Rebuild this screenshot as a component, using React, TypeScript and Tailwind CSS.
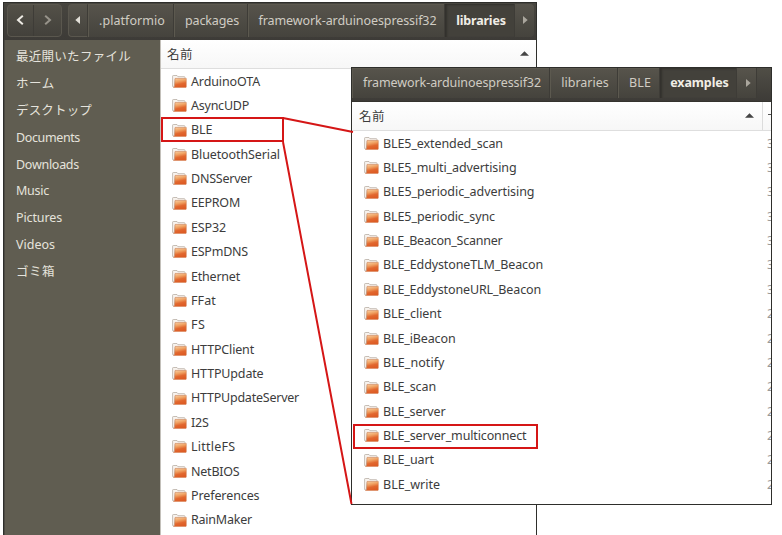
import { useLayoutEffect, useRef, useState } from "react";

type Entry = [name: string, width: number];

const places: Entry[] = [
  ["最近開いたファイル", 114],
  ["ホーム", 38],
  ["デスクトップ", 75],
  ["Documents", 63],
  ["Downloads", 62],
  ["Music", 32],
  ["Pictures", 45],
  ["Videos", 38],
  ["ゴミ箱", 38],
];

const libraries: Entry[] = [
  ["ArduinoOTA", 68],
  ["AsyncUDP", 57],
  ["BLE", 20.5],
  ["BluetoothSerial", 88],
  ["DNSServer", 60],
  ["EEPROM", 48],
  ["ESP32", 34],
  ["ESPmDNS", 56],
  ["Ethernet", 48],
  ["FFat", 24],
  ["FS", 13.5],
  ["HTTPClient", 62],
  ["HTTPUpdate", 71.5],
  ["HTTPUpdateServer", 107],
  ["I2S", 16.5],
  ["LittleFS", 43.5],
  ["NetBIOS", 47.5],
  ["Preferences", 67.5],
  ["RainMaker", 60],
];

const examples: Entry[] = [
  ["BLE5_extended_scan", 119],
  ["BLE5_multi_advertising", 132.5],
  ["BLE5_periodic_advertising", 150.5],
  ["BLE5_periodic_sync", 111],
  ["BLE_Beacon_Scanner", 118.5],
  ["BLE_EddystoneTLM_Beacon", 159],
  ["BLE_EddystoneURL_Beacon", 157],
  ["BLE_client", 57.5],
  ["BLE_iBeacon", 71.5],
  ["BLE_notify", 60.5],
  ["BLE_scan", 52],
  ["BLE_server", 61.5],
  ["BLE_server_multiconnect", 142.5],
  ["BLE_uart", 50],
  ["BLE_write", 56],
];

const dates = ["3", "3", "3", "3", "3", "3", "3", "2", "2", "2", "2", "2", "2", "2", "2"];

/* Text whose letter spacing is adjusted so that it fills the given width. */
function Label({ text, width }: { text: string; width: number }) {
  const ref = useRef<HTMLSpanElement>(null);
  const [spacing, setSpacing] = useState(0);
  useLayoutEffect(() => {
    if (ref.current) {
      const natural = ref.current.getBoundingClientRect().width;
      setSpacing((width + 1 - natural) / text.length);
    }
  }, [text, width]);
  return (
    <span ref={ref} className="whitespace-nowrap" style={{ letterSpacing: `${spacing}px` }}>
      {text}
    </span>
  );
}

function Folder() {
  return (
    <svg width="15" height="13" viewBox="0 0 15 13" className="mb-px shrink-0">
      <defs>
        <linearGradient id="folder" x1="0" y1="0" x2="0.3" y2="1">
          <stop offset="0" stopColor="#f8d3a8" />
          <stop offset="0.4" stopColor="#f0a263" />
          <stop offset="0.7" stopColor="#e2682f" />
          <stop offset="1" stopColor="#dd5c25" />
        </linearGradient>
      </defs>
      <path d="M.6 11.5V1.2Q.6.5 1.3.5H5l.9 1.2h6.4q.7 0 .7.7V4H3.2L2.2 12z" fill="#f8f4ef" stroke="#b9aea4" strokeWidth=".8" />
      <path d="M3 3.4h11.3v8.3q0 .9-.9.9H1.4q1.2-.3 1.3-1.4z" fill="url(#folder)" stroke="#cf7a4c" strokeWidth=".5" />
    </svg>
  );
}

function FileRow({ entry }: { entry: Entry }) {
  return (
    <div className="flex h-[24.38px] items-center gap-[4px]">
      <Folder />
      <Label text={entry[0]} width={entry[1]} />
    </div>
  );
}

function Crumb({ text, width, box, active }: { text: string; width: number; box: string; active?: boolean }) {
  return (
    <div
      className={`flex h-full shrink-0 items-center justify-center border-r border-[#3e3c37] pl-[3px] pt-px ${box} ${
        active
          ? "bg-[#43413b] font-bold text-[#f0ede6] shadow-[inset_2px_1px_2px_#33312d]"
          : "bg-linear-to-b from-[#57544c] to-[#45433d] text-[#d0ccc3] shadow-[inset_1px_1px_0_#5c594f]"
      }`}
    >
      <Label text={text} width={width} />
    </div>
  );
}

function Arrow({ left, className }: { left?: boolean; className: string }) {
  return (
    <svg width="5" height="8" viewBox="0 0 5 8" className={className}>
      <path d={left ? "M5 0v8L.3 4z" : "M0 0v8l4.7-4z"} fill="currentColor" />
    </svg>
  );
}

function Chevron({ right, className }: { right?: boolean; className: string }) {
  return (
    <svg width="8" height="10" viewBox="0 0 8 10" className={className}>
      <path d={right ? "M1.2 .8 6 5l-4.8 4.2" : "M6.8 .8 2 5l4.8 4.2"} fill="none" stroke="currentColor" strokeWidth="2" />
    </svg>
  );
}

function SortArrow() {
  return (
    <svg width="9" height="5" viewBox="0 0 9 5">
      <path d="M0 4.7 4.5.3 9 4.7z" fill="#454545" />
    </svg>
  );
}

export default function App() {
  return (
    <div className="relative h-[535px] w-[782px] overflow-hidden bg-white font-['Noto_Sans','Noto_Sans_CJK_JP',sans-serif] text-[12.5px] leading-none text-[#3c3c3c]">
      <section className="absolute left-[3px] top-[2px] flex h-[540px] w-[534px] flex-col border border-[#2e2e2b] bg-white">
        <header className="flex h-[37px] shrink-0 bg-linear-to-b from-[#47453f] to-[#3d3b37] pb-[3px] pl-[3px] pt-px">
          <div className="flex w-[55px] rounded-[4px] border border-[#5a574e] bg-linear-to-b from-[#535048] to-[#43413b]">
            <div className="flex w-[26px] items-center justify-center border-r border-[#3e3c37] pb-[2px] pr-[2px] text-[#edeae4]">
              <Chevron className="block" />
            </div>
            <div className="flex flex-1 items-center justify-center pb-[2px] text-[#97938a]">
              <Chevron right className="block" />
            </div>
          </div>
          <div className="ml-[6px] flex flex-1">
            <div className="flex w-[20px] items-center justify-center rounded-l-[4px] border border-r-[#3e3c37] border-[#5a574e] bg-linear-to-b from-[#57544c] to-[#45433d] pb-px pr-[2px] text-[#e2dfd8]">
              <Arrow left className="block" />
            </div>
            <Crumb text=".platformio" width={65} box="w-[86px]" />
            <Crumb text="packages" width={53} box="w-[74px]" />
            <Crumb text="framework-arduinoespressif32" width={177} box="w-[197px]" />
            <Crumb text="libraries" width={48.5} box="w-[70px]" active />
            <div className="flex w-[19px] items-center justify-center rounded-r-[4px] bg-linear-to-b from-[#57544c] to-[#45433d] pl-px pb-[2px] text-[#aaa69d]">
              <Arrow className="block" />
            </div>
          </div>
        </header>
        <div className="flex min-h-0 flex-1">
          <nav className="w-[157px] shrink-0 border-l border-[#4c4a43] border-r border-r-[#c3c0ba] bg-[#605d51] pl-[11px] pt-[4px] text-[#e5e3dc]">
            {places.map((p) => (
              <div key={p[0]} className="flex h-[26.85px] items-center">
                <Label text={p[0]} width={p[1]} />
              </div>
            ))}
          </nav>
          <div className="flex flex-1 flex-col">
            <div className="flex h-[29px] shrink-0 items-center justify-between border-b border-[#dedede] bg-linear-to-b from-white to-[#f7f7f7] pl-[6px] pr-[7px] pt-[2px]">
              <Label text="名前" width={25} />
              <div className="pb-[4px]">
                <SortArrow />
              </div>
            </div>
            <div className="pl-[11px] pt-[0.6px]">
              {libraries.map((e) => (
                <FileRow key={e[0]} entry={e} />
              ))}
            </div>
          </div>
        </div>
      </section>

      <section className="absolute left-[351px] top-[67px] flex h-[438px] w-[421px] flex-col overflow-hidden border border-[#2e2e2b] bg-white">
        <header className="flex h-[34px] shrink-0 border-b border-[#35342f] bg-linear-to-b from-[#504e46] to-[#3d3b37] pb-[3px]">
          <Crumb text="framework-arduinoespressif32" width={177} box="w-[198px]" />
          <Crumb text="libraries" width={46.5} box="w-[68px]" />
          <Crumb text="BLE" width={21} box="w-[42px]" />
          <Crumb text="examples" width={57.5} box="w-[77px]" active />
          <div className="flex w-[20px] items-center justify-center border-r border-[#3e3c37] bg-linear-to-b from-[#57544c] to-[#45433d] pl-[3px] pb-px text-[#aaa69d]">
            <Arrow className="block" />
          </div>
        </header>
        <div className="flex h-[29px] shrink-0 items-center border-b border-[#dedede] bg-linear-to-b from-white to-[#f7f7f7] pl-[7px]">
          <div className="pt-[2px]">
            <Label text="名前" width={25} />
          </div>
          <div className="ml-auto flex h-full w-[18px] shrink-0 border-r border-[#dcdcdc] pt-[11px]">
            <SortArrow />
          </div>
          <div className="flex w-[8px] shrink-0 justify-end">
            <div className="mb-[3px] h-px w-[3px] bg-[#555]" />
          </div>
        </div>
        <div className="flex min-h-0 flex-1 justify-between pl-[12px] pt-[0.6px]">
          <div>
            {examples.map((e) => (
              <FileRow key={e[0]} entry={e} />
            ))}
          </div>
          <div className="w-[4px] overflow-hidden text-[#999]">
            {dates.map((d, i) => (
              <div key={i} className="flex h-[24.38px] items-center">{d}</div>
            ))}
          </div>
        </div>
      </section>

      <div className="absolute left-[161px] top-[117px] h-[25px] w-[123px] border-2 border-[#d51616]" />
      <div className="absolute left-[353px] top-[424px] h-[25px] w-[185px] border-2 border-[#d51616]" />
      <svg className="absolute left-0 top-0" width="782" height="535">
        <path d="M283 118 353 132M283 142 351.5 504" fill="none" stroke="#d51616" strokeWidth="2" />
      </svg>
    </div>
  );
}
